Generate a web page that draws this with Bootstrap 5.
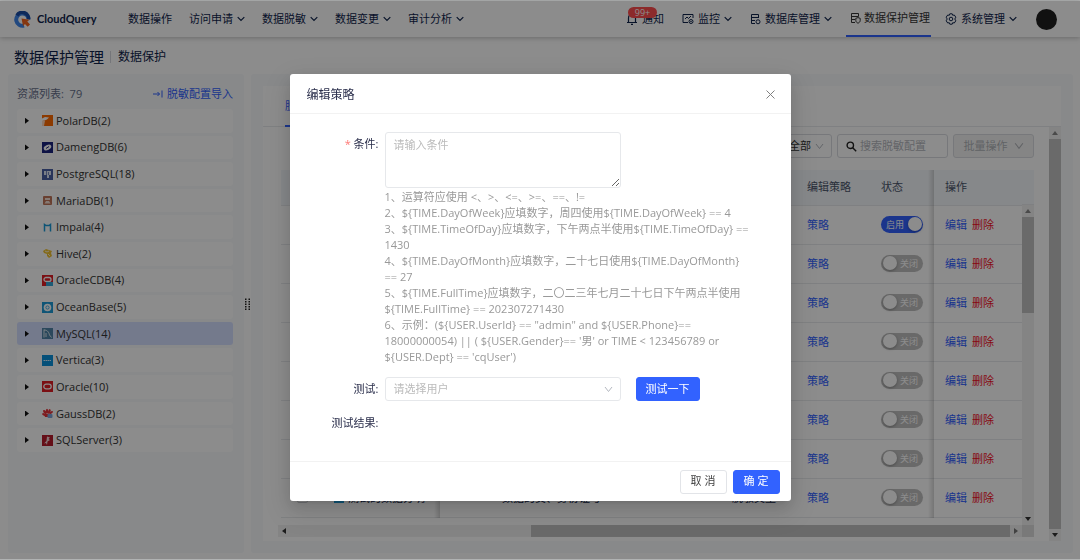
<!DOCTYPE html>
<html lang="zh-CN">
<head>
<meta charset="utf-8">
<meta name="viewport" content="width=device-width, initial-scale=1">
<title>CloudQuery 数据保护</title>
<link href="https://cdn.jsdelivr.net/npm/bootstrap@5.3.0/dist/css/bootstrap.min.css" rel="stylesheet">
<style>
:root{--cq-blue:#3262ff;--cq-ink:#0f244c;--cq-line:#e8eaed;--cq-panel:#f7f9fc}
body{font-family:"Open Sans","Noto Sans CJK SC",sans-serif;font-size:11px;line-height:16px;color:var(--cq-ink);background:#fff;overflow:hidden}
body,button,input,select,textarea{font-weight:400}
a{text-decoration:none;color:var(--cq-blue)}
svg{display:block;flex:none}
.page{height:100vh;border-top:1px solid #b0b2b2;border-bottom:1px solid #b0b2b2}
.topbar{height:36px;padding:0 23px 0 14px;box-shadow:0 1px 5px rgba(0,0,0,.25);flex:none}
.brand{font-family:"Lato","Open Sans",sans-serif;font-weight:700;font-size:11px;color:var(--cq-ink);gap:6px;width:114px}
.topbar .nav-link{padding:0;height:36px;gap:4px;color:var(--cq-ink);white-space:nowrap;position:relative;display:flex;align-items:center}
.menu-left{gap:17px}
.menu-right{gap:18px}
.menu-right .nav-link.active{border-bottom:2px solid var(--cq-blue);color:#333;gap:3px;padding:0 1px 0 4px;margin:0 -4px 0 -4px}
.count-badge{position:absolute;left:2px;top:6px;width:29px;height:11px;border-radius:6px;background:#ff4d4f;color:#fff;font-size:9px;line-height:11px;text-align:center}
.avatar{width:21px;height:21px;border-radius:50%;background:#202020;margin-left:1px}
.page-title{padding:2px 14px 0;height:37px;flex:none}
.page-title h1{font-size:15px;line-height:20px;font-weight:400;margin:0}
.page-title span{font-size:12px;border-left:1px solid #d5d8de;padding-left:7px;margin-left:6px;line-height:12px}
.panels{padding:0 7px 6px 8px;min-height:0}
.side{width:236px;background:var(--cq-panel);padding:12px 11px 0 9px;flex:none;border-radius:3px}
.side-head{height:23px;color:#66708a;line-height:16px;padding-bottom:7px}
.tree{height:343px;gap:3px;margin:0;padding:0;list-style:none}
.tree li{flex:1;background:#fff;border-radius:3px;color:#333}
.tree li.on{background:#d4deff}
.tree button{border:0;background:none;width:100%;height:100%;padding:0 8px;color:inherit;text-align:left;display:flex;align-items:center}
.tree .caret{width:4px;height:6px;background:#111;clip-path:polygon(0 0,100% 50%,0 100%);margin-right:13px}
.tree svg{margin-right:3px}
.grip{width:7px;flex:none;padding-bottom:18px}
.main{background:var(--cq-panel);padding:12px;border-radius:3px;min-width:0}
.sheet{background:#fff;min-height:0}
.tabs{height:41px;border-bottom:1px solid var(--cq-line);padding-left:22px;flex:none}
.tabs .tab{height:41px;border:0;border-bottom:2px solid var(--cq-blue);background:none;color:var(--cq-blue);padding:0}
.work{min-height:0}
.work-inner{padding:7px 15px 0 15px;min-width:0}
.tools{gap:5px;padding-bottom:12px}
.tools .form-select,.tools .box,.tools .btn{height:24px;font-size:11px;border:1px solid #d9dbe0;border-radius:3px}
.tools .form-select{width:74px;padding:0 18px 0 30px;color:#333;background-position:right 7px center;background-size:9px 9px}
.thin-select{--bs-form-select-bg-img:url("data:image/svg+xml,%3csvg xmlns='http://www.w3.org/2000/svg' viewBox='0 0 9 9'%3e%3cpath fill='none' stroke='%23b4b8c0' d='M1 2l3.500 4.500L8 2'/%3e%3c/svg%3e");background-image:var(--bs-form-select-bg-img)}
.tools .box{width:111px;padding:0 8px;gap:3px}
.tools .box input{border:0;padding:0;width:80px;background:none;font-size:11px}
.box input::placeholder{color:#b4b7bd}
.tools .btn{width:81px;background:#f3f3f3;color:#b0b3b8;padding:0;gap:6px}
.grid-wrap{min-height:0;overflow:hidden;margin-left:3px}
.grid-wrap table{table-layout:fixed;margin:0;font-size:11px;--bs-table-bg:transparent;border-color:var(--cq-line)}
.grid-wrap th{height:35px;font-weight:400;color:#4c566b;background:#f4f7fb;padding:0 12px;vertical-align:middle;white-space:nowrap}
.grid-wrap td{height:39px;padding:0 12px;vertical-align:middle;white-space:nowrap;color:var(--cq-ink)}
.grid-wrap td.name-cell{padding:0 0 0 9px}
.head-fill{height:35px;background:#f4f7fb;border-bottom:1px solid var(--cq-line)}
.fixed-edge{position:relative}
.fixed-edge::before{content:"";position:absolute;left:-5px;top:0;bottom:-1px;width:6px;background:linear-gradient(to right,transparent,rgba(0,0,0,.16))}
.danger-link{color:#f5101c;margin-left:5px}
.switch{position:relative;display:block;width:42px;height:17px}
.switch input{appearance:none;margin:0;display:block;width:42px;height:17px;border-radius:9px;background:#bfbfbf;position:relative}
.switch input::before{content:"";position:absolute;left:2px;top:1px;width:14px;height:14px;border-radius:50%;background:#fff;box-shadow:0 1px 3px rgba(0,0,0,.3)}
.switch span{position:absolute;left:19px;top:0;line-height:17px;font-size:9px;color:#fff}
.switch input:checked{background:var(--cq-blue)}
.switch input:checked::before{left:27px}
.switch input:checked + span{left:5px}
.mini-check{width:11px;height:11px;margin:0;display:block;appearance:none;border:1px solid #c9ccd2;border-radius:2px}
.rail{background:#f1f1f1;flex:none}
.rail-v{width:12px}
.rail-v b,.rail-h b{background:#c1c1c1}
.arr{flex:none;display:flex;align-items:center;justify-content:center;width:12px;height:12px}
.arr::before{content:"";width:6px;height:4px;background:#333;clip-path:polygon(50% 0,100% 100%,0 100%)}
.arr.dn::before{transform:rotate(180deg)}
.arr.lf::before{transform:rotate(-90deg)}
.arr.rt::before{transform:rotate(90deg);background:#777}
.arr.dim::before{background:#888}
.corner{width:12px;background:#dcdcdc}
.veil{position:fixed;inset:1px 0;background:rgba(0,0,0,.45)}
.modal-dialog{max-width:501px;margin:74px auto 0;transform:none!important}
.modal-content{border:0;border-radius:3px;color:#2b2f4c;box-shadow:0 3px 6px -4px rgba(0,0,0,.2),0 6px 16px rgba(0,0,0,.12),0 9px 28px 8px rgba(0,0,0,.08)}
.modal-header{height:40px;padding:2px 16px 0 17px;border-color:#f2f2f2;border-radius:0}
.modal-title{font-size:12px;line-height:18px;font-weight:400}
.modal-header button{border:0;background:none;padding:0}
.modal-body{padding:18px 0 0;height:347px}
.lab{width:95px;padding-right:6px;text-align:right;flex:none;line-height:24px}
.lab em{color:#ff7875;font-style:normal}
.w-field{width:236px}
.modal-body .form-control,.modal-body .form-select{border:1px solid #e6e8eb;border-radius:3px;font-size:11px;line-height:16px;padding:4px 8px}
.modal-body textarea.form-control{height:56px;min-height:0;resize:vertical}
.modal-body .form-control::placeholder{color:#bbb}
.modal-body .form-select{height:24px;padding:0 24px 0 8px;color:#bbb;background-position:right 7px center;background-size:9px 9px}
.tips{color:#999;line-height:16px;padding:1px 0 12px;white-space:nowrap}
.btn-cq{height:24px;padding:0;font-size:11px;border-radius:3px;background:var(--cq-blue);border:1px solid var(--cq-blue);color:#fff}
.btn-cq.plain{background:#fff;border-color:#e2e4e8;color:#444}
.w-test{width:64px;margin-left:15px}.w-act{width:47px}
.result-row{padding-top:10px}
.modal-footer{height:40px;padding:0 11px;gap:6px;border-color:#f2f2f2}
.modal-footer>*{margin:0}
</style>
</head>
<body>
<svg width="0" height="0" class="position-absolute">
<symbol id="chev" viewBox="0 0 8 8"><path d="M.7 2.200L4 5.500l3.300-3.300" fill="none" stroke="currentColor" stroke-width="1.200"/></symbol>
</svg>
<div class="page d-flex flex-column">
  <header class="topbar d-flex align-items-center">
    <a href="#" class="brand d-flex align-items-center">
      <svg width="17" height="17" viewBox="0 0 17 17"><path d="M10 14.600A6.200 6.200 0 1 1 14.600 8" fill="none" stroke="#3f86ea" stroke-width="4"/><path d="M3 4.500A6.200 6.200 0 0 1 14.500 8.500" fill="none" stroke="#1b4da6" stroke-width="3.600"/><path d="M7.500 7.500l8 1.300-2.200 1.800 2.700 3-2.300 2.200-2.800-2.900-1.800 2.300z" fill="#f2641e"/></svg>
      CloudQuery</a>
    <nav class="d-flex menu-left">
      <a href="#" class="nav-link">数据操作</a>
      <a href="#" class="nav-link">访问申请<svg width="8" height="8"><use href="#chev"/></svg></a>
      <a href="#" class="nav-link">数据脱敏<svg width="8" height="8"><use href="#chev"/></svg></a>
      <a href="#" class="nav-link">数据变更<svg width="8" height="8"><use href="#chev"/></svg></a>
      <a href="#" class="nav-link">审计分析<svg width="8" height="8"><use href="#chev"/></svg></a>
    </nav>
    <nav class="d-flex align-items-center menu-right ms-auto">
      <a href="#" class="nav-link"><svg width="12" height="12" viewBox="0 0 12 12" fill="none" stroke="currentColor" stroke-width="1.200"><path d="M1 9.500h10M2.500 9.500V5a3.500 3.500 0 0 1 7 0v4.500M5 11.400h2"/></svg>通知<span class="count-badge">99+</span></a>
      <a href="#" class="nav-link"><svg width="12" height="12" viewBox="0 0 12 12" fill="none" stroke="currentColor"><path d="M11 5V1.500H1v8h5M3 6l2-2 1.500 1.500L9 3"/><circle cx="9" cy="8.500" r="2"/><circle cx="9" cy="8.500" r=".4"/></svg>监控<svg width="8" height="8"><use href="#chev"/></svg></a>
      <a href="#" class="nav-link"><svg width="11" height="12" viewBox="0 0 11 12" fill="none" stroke="currentColor"><path d="M8.500 5V1.500H1.500v9H5M1.500 4.500h7M1.500 7.500H5"/><circle cx="8" cy="8.800" r="2"/></svg>数据库管理<svg width="8" height="8"><use href="#chev"/></svg></a>
      <a href="#" class="nav-link active"><svg width="11" height="12" viewBox="0 0 11 12" fill="none" stroke="currentColor"><path d="M8.500 4.500v-3h-7v9H5M1.500 4.500h7M1.500 7.500H5"/><path d="M5.800 6.300L8 5.600l2.200.7v2.200c0 1.300-.9 2.100-2.200 2.700-1.300-.6-2.200-1.400-2.200-2.700z"/></svg>数据保护管理</a>
      <a href="#" class="nav-link"><svg width="12" height="12" viewBox="0 0 12 12" fill="none" stroke="currentColor"><path d="M4.800 .8h2.400l.5 1.500 1.600-.3 1.500 2.200L9.800 6l1 1.800L9.300 10l-1.600-.3-.5 1.500H4.800l-.5-1.500-1.600.3-1.500-2.200 1-1.800-1-1.800L2.700 2l1.600.3z"/><circle cx="6" cy="6" r="1.800"/></svg>系统管理<svg width="8" height="8"><use href="#chev"/></svg></a>
      <span class="avatar"></span>
    </nav>
  </header>
  <div class="page-title d-flex align-items-center"><h1>数据保护管理</h1><span>数据保护</span></div>
  <div class="panels d-flex flex-grow-1">
    <aside class="side">
      <div class="side-head d-flex justify-content-between"><span>资源列表:&nbsp; 79</span>
        <a href="#" class="d-flex align-items-center gap-1"><svg width="10" height="8" viewBox="0 0 10 8" fill="none" stroke="currentColor"><path d="M0 4h6.500M4.500 2l2 2-2 2M9 .5v7"/></svg>脱敏配置导入</a></div>
      <ul class="tree d-flex flex-column" id="tree"></ul>
    </aside>
    <div class="grip d-flex align-items-center justify-content-center"><svg width="5" height="13" viewBox="0 0 5 13" fill="none" stroke="#222" stroke-width="1.500" stroke-dasharray="1.500 1"><path d="M.75 .5v12M4.250 .5v12"/></svg></div>
    <main class="main flex-grow-1 d-flex">
      <section class="sheet flex-grow-1 d-flex flex-column">
        <div class="tabs"><button class="tab" type="button">脱敏配置</button></div>
        <div class="work d-flex flex-grow-1">
          <div class="work-inner flex-grow-1 d-flex flex-column pb-1">
            <div class="tools d-flex justify-content-end">
              <select class="form-select thin-select" aria-label="状态筛选"><option>全部</option></select>
              <label class="box d-flex align-items-center"><svg width="11" height="11" viewBox="0 0 11 11" fill="none" stroke="#222" stroke-width="1.400"><circle cx="4.300" cy="4.300" r="3.200"/><path d="M6.700 6.700l3.500 3.500"/></svg><input type="text" placeholder="搜索脱敏配置" aria-label="搜索脱敏配置"></label>
              <button type="button" class="btn d-flex align-items-center justify-content-center">批量操作<svg width="10" height="10" viewBox="0 0 9 9"><path d="M1 2l3.500 4.500L8 2" fill="none" stroke="currentColor"/></svg></button>
            </div>
            <div class="grid-wrap flex-grow-1 d-flex">
              <div class="flex-grow-1">
              <table class="table">
                <colgroup><col width="44"><col width="114"><col width="51"><col><col width="75"><col width="74"><col width="64"><col width="89"></colgroup>
                <thead><tr><th></th><th></th><th class="fixed-edge"></th><th></th><th></th><th>编辑策略</th><th>状态</th><th class="fixed-edge">操作</th></tr></thead>
                <tbody id="rows"></tbody>
              </table>
              </div>
              <div class="rail-v d-flex flex-column"><div class="head-fill"></div>
                <div class="rail flex-grow-1 d-flex flex-column"><span class="arr dim"></span><b style="height:30%"></b><span class="arr dn mt-auto"></span></div></div>
            </div>
            <div class="rail rail-h d-flex"><span class="arr lf"></span><b class="ms-auto" style="width:63.4%"></b><span class="arr rt"></span><span class="corner"></span></div>
          </div>
          <div class="rail rail-v d-flex flex-column"><span class="arr dim"></span><b class="flex-grow-1"></b><span class="arr dn"></span></div>
        </div>
      </section>
    </main>
  </div>
</div>

<div class="veil"></div>
<div class="modal d-block" tabindex="-1" role="dialog" aria-labelledby="dlgTitle">
  <div class="modal-dialog">
    <form class="modal-content">
      <div class="modal-header"><h2 class="modal-title" id="dlgTitle">编辑策略</h2>
        <button type="button" aria-label="关闭"><svg width="9" height="9" viewBox="0 0 9 9" stroke="#808080" fill="none"><path d="M.5.500l8 8M8.500.500l-8 8"/></svg></button></div>
      <div class="modal-body">
        <div class="d-flex"><label class="lab" for="cond"><em>*</em> 条件:</label>
          <div><textarea class="form-control w-field" id="cond" placeholder="请输入条件"></textarea>
            <div class="tips">1、运算符应使用 &lt;、&gt;、&lt;=、&gt;=、==、!=<br>2、${TIME.DayOfWeek}应填数字，周四使用${TIME.DayOfWeek} == 4<br>3、${TIME.TimeOfDay}应填数字，下午两点半使用${TIME.TimeOfDay} ==<br>1430<br>4、${TIME.DayOfMonth}应填数字，二十七日使用${TIME.DayOfMonth}<br>== 27<br>5、${TIME.FullTime}应填数字，二〇二三年七月二十七日下午两点半使用<br>${TIME.FullTime} == 202307271430<br>6、示例：(${USER.UserId} == "admin" and ${USER.Phone}==<br>18000000054) || ( ${USER.Gender}== '男' or TIME &lt; 123456789 or<br>${USER.Dept} == 'cqUser')</div></div></div>
        <div class="d-flex"><label class="lab" for="user">测试:</label>
          <select class="form-select thin-select w-field" id="user"><option>请选择用户</option></select>
          <button type="button" class="btn btn-cq w-test">测试一下</button></div>
        <div class="d-flex result-row"><span class="lab">测试结果:</span></div>
      </div>
      <div class="modal-footer"><button type="button" class="btn btn-cq plain w-act">取 消</button><button type="button" class="btn btn-cq w-act">确 定</button></div>
    </form>
  </div>
</div>
<script src="https://cdn.jsdelivr.net/npm/bootstrap@5.3.0/dist/js/bootstrap.bundle.min.js"></script>
<script>
const sq = (c, inner) => `<rect width="11" height="11" fill="${c}"/>${inner}`;
const sources = [
  ['PolarDB(2)', sq('#ff6a00', '<path d="M0 3.500l3-1.500 4 .5-1.500 1.500L4 5 0 6z" fill="#fff"/><path d="M0 6l3-.5L2 11H0z" fill="#fff" opacity=".75"/>')],
  ['DamengDB(6)', sq('#1a237e', '<ellipse cx="5.500" cy="5.500" rx="4" ry="2.500" transform="rotate(-25 5.500 5.500)" fill="#fff"/><path d="M4 6.500l3-2" stroke="#1a237e"/>')],
  ['PostgreSQL(18)', sq('#4a5fa5', '<path d="M2 2h7v4H7v3H5V6H2z" fill="#dfe6f5"/><path d="M4.500 2v4M6.500 3v3" stroke="#4a5fa5" stroke-width=".7"/>')],
  ['MariaDB(1)', '<rect x="1" y="1" width="9" height="9" rx="1" fill="#c0765a"/><path d="M3 3h5v2H3zM2.500 8.500h6L7 6H4z" fill="#f3ddd2"/>'],
  ['Impala(4)', '<path d="M2.500 9.500V2.500l1.500 1h3l1.500-1v7" fill="none" stroke="#1a9ad7" stroke-width="1.500"/>'],
  ['Hive(2)', '<path d="M1 3l3-2 3 1 3 1-1 2 1 3-3 2-2-2V6L2 5z" fill="#f0c232"/><path d="M3 3l2 1 2-1M6 6l2 2" stroke="#fff" fill="none" stroke-width=".8"/>'],
  ['OracleCDB(4)', sq('#e01e26', '<rect x="2" y="2.500" width="7" height="4" rx="2" fill="none" stroke="#fff" stroke-width="1.300"/><path d="M4 7h7v4H4z" fill="#35a7d8"/>')],
  ['OceanBase(5)', sq('#1e9bd8', '<circle cx="5.500" cy="5.500" r="3.800" fill="#fff"/><circle cx="5.500" cy="5.500" r="1.600" fill="none" stroke="#1e9bd8" stroke-width=".8"/>')],
  ['MySQL(14)', sq('#5084a8', '<path d="M2 1.500v8M2 2c4 0 5 3 5.500 5l2 2.500M4 5v4" fill="none" stroke="#fff" stroke-width=".8"/>')],
  ['Vertica(3)', sq('#0a93dc', '<path d="M1.500 5.500h8" stroke="#d9efff" stroke-dasharray="1.500 .5"/>')],
  ['Oracle(10)', sq('#e01e26', '<rect x="1.800" y="3.200" width="7.400" height="4.600" rx="2.300" fill="none" stroke="#fff" stroke-width="1.300"/>')],
  ['GaussDB(2)', '<g fill="#e5333a"><ellipse cx="2" cy="6.500" rx="2" ry="1.200" transform="rotate(25 2 6.500)"/><ellipse cx="2.800" cy="4" rx="2.300" ry="1.300" transform="rotate(55 2.800 4)"/><ellipse cx="5" cy="3.200" rx="1.200" ry="2.500"/><ellipse cx="7.300" cy="3.500" rx="1.200" ry="2.500" transform="rotate(20 7.300 3.500)"/><ellipse cx="9.200" cy="4.500" rx="1.100" ry="2" transform="rotate(50 9.200 4.500)"/><path d="M2 6h5v3H3z"/></g><rect x="5.500" y="6" width="5" height="4" rx="1" fill="#7fa8dc"/>'],
  ['SQLServer(3)', sq('#b81c2c', '<path d="M5 1.500l3 1-1.500 1.500 1.500 1-2.500 1.500L5 10 4 8l-2 .5L4.500 6z" fill="#f4d4d6"/>')]
];
document.getElementById('tree').innerHTML = sources.map(([name, art]) =>
  `<li class="${name.startsWith('MySQL') ? 'on' : ''}"><button type="button"><span class="caret"></span><svg width="11" height="11" viewBox="0 0 11 11">${art}</svg>${name}</button></li>`).join('');

const records = [{on: true}, {}, {}, {}, {}, {}, {}, {name: '测试的数据分明', field: '数据的员、身份证号', kind: '脱敏类型'}];
document.getElementById('rows').innerHTML = records.map(r =>
  `<tr><td class="ps-3"><input type="checkbox" class="mini-check" aria-label="选择"></td>
  <td class="name-cell"><span class="d-flex align-items-center gap-1">${r.name ? '<svg width="10" height="10"><rect width="10" height="10" fill="#1e9bd8"/></svg>' + r.name : ''}</span></td>
  <td class="fixed-edge"></td><td>${r.field || ''}</td><td>${r.kind || ''}</td><td><a href="#">策略</a></td>
  <td><label class="switch"><input type="checkbox" role="switch" ${r.on ? 'checked' : ''}><span>${r.on ? '启用' : '关闭'}</span></label></td>
  <td class="fixed-edge"><a href="#">编辑</a><a href="#" class="danger-link">删除</a></td></tr>`).join('');
</script>
</body>
</html>
